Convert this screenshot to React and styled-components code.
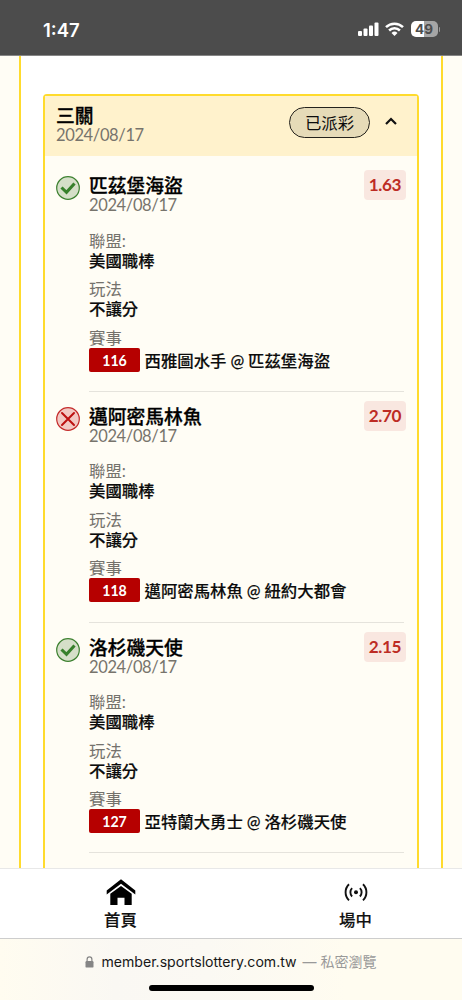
import React from 'react';
import styled, { createGlobalStyle } from "styled-components";

const legs = [
  {
    team: "匹茲堡海盜",
    date: "2024/08/17",
    odds: "1.63",
    won: true,
    league: "美國職棒",
    play: "不讓分",
    code: "116",
    match: "西雅圖水手 @ 匹茲堡海盜",
  },
  {
    team: "邁阿密馬林魚",
    date: "2024/08/17",
    odds: "2.70",
    won: false,
    league: "美國職棒",
    play: "不讓分",
    code: "118",
    match: "邁阿密馬林魚 @ 紐約大都會",
  },
  {
    team: "洛杉磯天使",
    date: "2024/08/17",
    odds: "2.15",
    won: true,
    league: "美國職棒",
    play: "不讓分",
    code: "127",
    match: "亞特蘭大勇士 @ 洛杉磯天使",
  },
];

const ResultIcon = ({ won }) => (
  <svg width="24" height="24" viewBox="0 0 24 24" fill="none">
    <circle
      cx="12"
      cy="12"
      r="11.3"
      fill={won ? "#d5dfc8" : "#f2c9c4"}
      stroke={won ? "#3d8130" : "#c42a2a"}
      strokeWidth="1.2"
    />
    {won ? (
      <path d="M5.5 11.5l5 4.8 8-8.8" stroke="#37802b" strokeWidth="3.1" />
    ) : (
      <path d="M6 6l12 12M18 6L6 18" stroke="#bd1111" strokeWidth="2" strokeLinecap="round" />
    )}
  </svg>
);

const StatusBar = () => (
  <Status>
    <time>1:47</time>
    <StatusIcons>
      <svg width="21" height="14" viewBox="0 0 21 14" fill="#fff">
        <rect x="0" y="9" width="4" height="5" rx="1" />
        <rect x="5.5" y="6.6" width="4" height="7.4" rx="1" />
        <rect x="11" y="3.6" width="4" height="10.4" rx="1" />
        <rect x="16.5" y="0.4" width="4" height="13.6" rx="1" />
      </svg>
      <svg width="19" height="14" viewBox="0 0 19 14" fill="none" stroke="#fff" strokeWidth="2.5">
        <path d="M1 5.1a12.2 12.2 0 0 1 17 0" />
        <path d="M4.1 8.5a7.6 7.6 0 0 1 10.8 0" />
        <path d="M9.5 14l-3-3.1a4.3 4.3 0 0 1 6 0z" fill="#fff" stroke="none" />
      </svg>
      <Battery>
        <Charge>49</Charge>
        <i />
      </Battery>
    </StatusIcons>
  </Status>
);

const Leg = ({ team, date, odds, won, league, play, code, match }) => (
  <LegRow>
    <Mark>
      <ResultIcon won={won} />
    </Mark>
    <Details>
      <Title>{team}</Title>
      <DateText>{date}</DateText>
      <Field $first>
        <Label>聯盟:</Label>
        <Value>{league}</Value>
      </Field>
      <Field>
        <Label>玩法</Label>
        <Value>{play}</Value>
      </Field>
      <Field>
        <Label>賽事</Label>
        <Match>
          <Code>{code}</Code>
          <span>{match}</span>
        </Match>
      </Field>
    </Details>
    <Odds>{odds}</Odds>
  </LegRow>
);

export default function App() {
  return (
    <Screen>
      <GlobalStyle />
      <StatusBar />
      <Page>
        <Panel>
          <Card>
            <CardHeader>
              <div>
                <Title>三關</Title>
                <DateText>2024/08/17</DateText>
              </div>
              <Paid>已派彩</Paid>
              <svg width="12" height="8" viewBox="0 0 12 8" fill="none" stroke="#111" strokeWidth="2.2">
                <path d="M1 7l5-5 5 5" />
              </svg>
            </CardHeader>
            {legs.map((leg) => (
              <Leg key={leg.code} {...leg} />
            ))}
          </Card>
        </Panel>
      </Page>
      <Nav>
        <NavItem>
          <svg width="30" height="28" viewBox="0 0 30 28">
            <path d="M15 0.3L29.3 11.500v4L15 4.700 0.7 15.500v-4z" />
            <path d="M15 7l10.700 7.800V26h-7.200v-7.300h-7V26H4.300V14.800z" />
          </svg>
          <span>首頁</span>
        </NavItem>
        <NavItem>
          <svg width="24" height="28" viewBox="0 0 24 28" fill="none" stroke="#111" strokeWidth="1.9">
            <circle cx="12" cy="13.3" r="2" fill="#111" stroke="none" />
            <path d="M8.1 9.100a6 6 0 0 0 0 8.400M15.900 9.100a6 6 0 0 1 0 8.400" />
            <path d="M5 5.200a11.300 11.300 0 0 0 0 16.200M19 5.200a11.300 11.300 0 0 1 0 16.200" />
          </svg>
          <span>場中</span>
        </NavItem>
      </Nav>
      <BrowserBar>
        <Address>
          <svg width="9" height="12" viewBox="0 0 9 12" fill="#858585">
            <rect x="0.500" y="5" width="8" height="6.600" rx="1.200" />
            <path d="M2.100 5.500V3.600a2.400 2.700 0 0 1 4.800 0v1.900" fill="none" stroke="#858585" strokeWidth="1.200" />
          </svg>
          <Host>member.sportslottery.com.tw</Host>
          <Private>— 私密瀏覽</Private>
        </Address>
        <HomeBar />
      </BrowserBar>
    </Screen>
  );
}

const GlobalStyle = createGlobalStyle`
  * {
    box-sizing: border-box;
  }
  body {
    margin: 0;
    font-family: Lato, "Noto Sans CJK TC", sans-serif;
    color: #0c0c0c;
  }
  svg {
    display: block;
    flex: none;
  }
`;

const Screen = styled.div`
  display: flex;
  flex-direction: column;
  height: 1000px;
  overflow: hidden;
  background: #fffdf5;
`;

const Status = styled.header`
  display: flex;
  flex: none;
  align-items: center;
  justify-content: space-between;
  height: 56px;
  padding: 4px 22px 0 43px;
  background: #4c4c4c;
  border-bottom: 1px solid #858585;
  time {
    font: 600 18.5px/24px Inter, sans-serif;
    color: #fff;
  }
`;

const StatusIcons = styled.div`
  display: flex;
  align-items: center;
  gap: 6.500px;
  padding-bottom: 1px;
`;

const Battery = styled.div`
  display: flex;
  align-items: center;
  gap: 1px;
  i {
    width: 1.5px;
    height: 5px;
    border-radius: 0 2px 2px 0;
    background: #999;
  }
`;

const Charge = styled.span`
  width: 27px;
  height: 16px;
  border-radius: 5px;
  background: linear-gradient(90deg, #fff 49%, #a5a5a5 49%);
  color: #4c4c4c;
  font: 700 13.5px/16px Inter, sans-serif;
  text-align: center;
`;

const Page = styled.main`
  flex: 1;
  min-height: 0;
  overflow: hidden;
  padding: 0 19px;
`;

const Panel = styled.section`
  height: 100%;
  padding: 38px 22px 0;
  background: #fff;
  border: solid #ffdb2d;
  border-width: 0 2px;
`;

const Card = styled.article`
  height: 900px;
  background: #fffdf5;
  border: 2px solid #ffdb2d;
  border-radius: 4px;
`;

const CardHeader = styled.div`
  display: flex;
  align-items: center;
  height: 60px;
  margin-bottom: 5px;
  padding: 0 20px 0 11px;
  background: #fff2cc;
  > div {
    flex: 1;
  }
  > svg {
    margin-left: 15px;
    margin-bottom: 11px;
  }
`;

const Title = styled.h2`
  margin: 0;
  font-size: 18.8px;
  font-weight: 500;
  line-height: 20px;
  color: #000;
  -webkit-text-stroke: 0.3px;
`;

const DateText = styled.div`
  font-size: 16.5px;
  line-height: 19px;
  padding-bottom: 1px;
  letter-spacing: -0.37px;
  color: #77746c;
`;

const Paid = styled.span`
  width: 81px;
  height: 31px;
  margin-bottom: 8px;
  border: 1px solid #24221c;
  border-radius: 16px;
  background: #e6dbb8;
  font-size: 16.4px;
  line-height: 29px;
  text-align: center;
`;

const LegRow = styled.div`
  display: flex;
  align-items: flex-start;
  height: 230.8px;
  padding: 0 11px 0 10.500px;
`;

const Mark = styled.div`
  width: 33.500px;
  padding-top: 15px;
`;

const Details = styled.div`
  flex: 1;
  height: 100%;
  padding-top: 15px;
  border-bottom: 1px solid #e5e3dc;
  /* the rule runs under most of the odds */
  margin-right: -40px;
`;

const Odds = styled.span`
  flex: none;
  width: 42px;
  height: 30px;
  margin-top: 9.300px;
  border-radius: 4px;
  background: #f9e7e0;
  color: #bd2c24;
  font-size: 17.200px;
  font-weight: 700;
  line-height: 30px;
  letter-spacing: -0.400px;
  text-align: center;
`;

const Field = styled.div`
  padding-top: ${({ $first }) => ($first ? "14.500px" : "8.500px")};
`;

const Label = styled.div`
  font-size: 16.4px;
  line-height: 20px;
  color: #74726c;
`;

const Value = styled.div`
  font-size: 16.4px;
  font-weight: 500;
  line-height: 20px;
  -webkit-text-stroke: 0.2px;
`;

const Match = styled.div`
  display: flex;
  align-items: center;
  gap: 4.500px;
  height: 24px;
  font-size: 16.4px;
  font-weight: 500;
  line-height: 24px;
  white-space: nowrap;
  > span {
    padding-top: 2px;
    word-spacing: -0.200px;
    -webkit-text-stroke: 0.15px;
  }
`;

const Code = styled.b`
  width: 51px;
  height: 24px;
  border-radius: 2px;
  background: #b60000;
  color: #fff;
  font-size: 14.200px;
  line-height: 25px;
  text-align: center;
`;

const Nav = styled.nav`
  display: flex;
  flex: none;
  height: 71px;
  padding-left: 3px;
  background: #fff;
  border-top: 1px solid #e8e8e8;
  border-bottom: 1px solid #cdcdcd;
`;

const NavItem = styled.div`
  display: flex;
  flex: none;
  flex-direction: column;
  align-items: center;
  width: 235px;
  padding-top: 10px;
  font-size: 16.400px;
  font-weight: 500;
  line-height: 26px;
  color: #111;
  -webkit-text-stroke: 0.15px;
`;

const BrowserBar = styled.footer`
  display: flex;
  flex: none;
  flex-direction: column;
  align-items: center;
  justify-content: space-between;
  height: 61px;
  padding: 13px 0 9px;
  background: linear-gradient(90deg, #fffcf0, #faf8f3 25%, #fbf9f3 45%, #fffcf0 75%);
`;

const Address = styled.div`
  display: flex;
  align-items: center;
  font-size: 14px;
  line-height: 20px;
  white-space: nowrap;
`;

const Host = styled.span`
  margin: 0 6px 0 7px;
  font-family: Inter, sans-serif;
  font-size: 14.100px;
  color: #171717;
`;

const Private = styled.span`
  font-family: Inter, "Noto Sans CJK TC", sans-serif;
  color: #999;
`;

const HomeBar = styled.div`
  width: 165px;
  height: 6px;
  border-radius: 3px;
  background: #000;
`;
